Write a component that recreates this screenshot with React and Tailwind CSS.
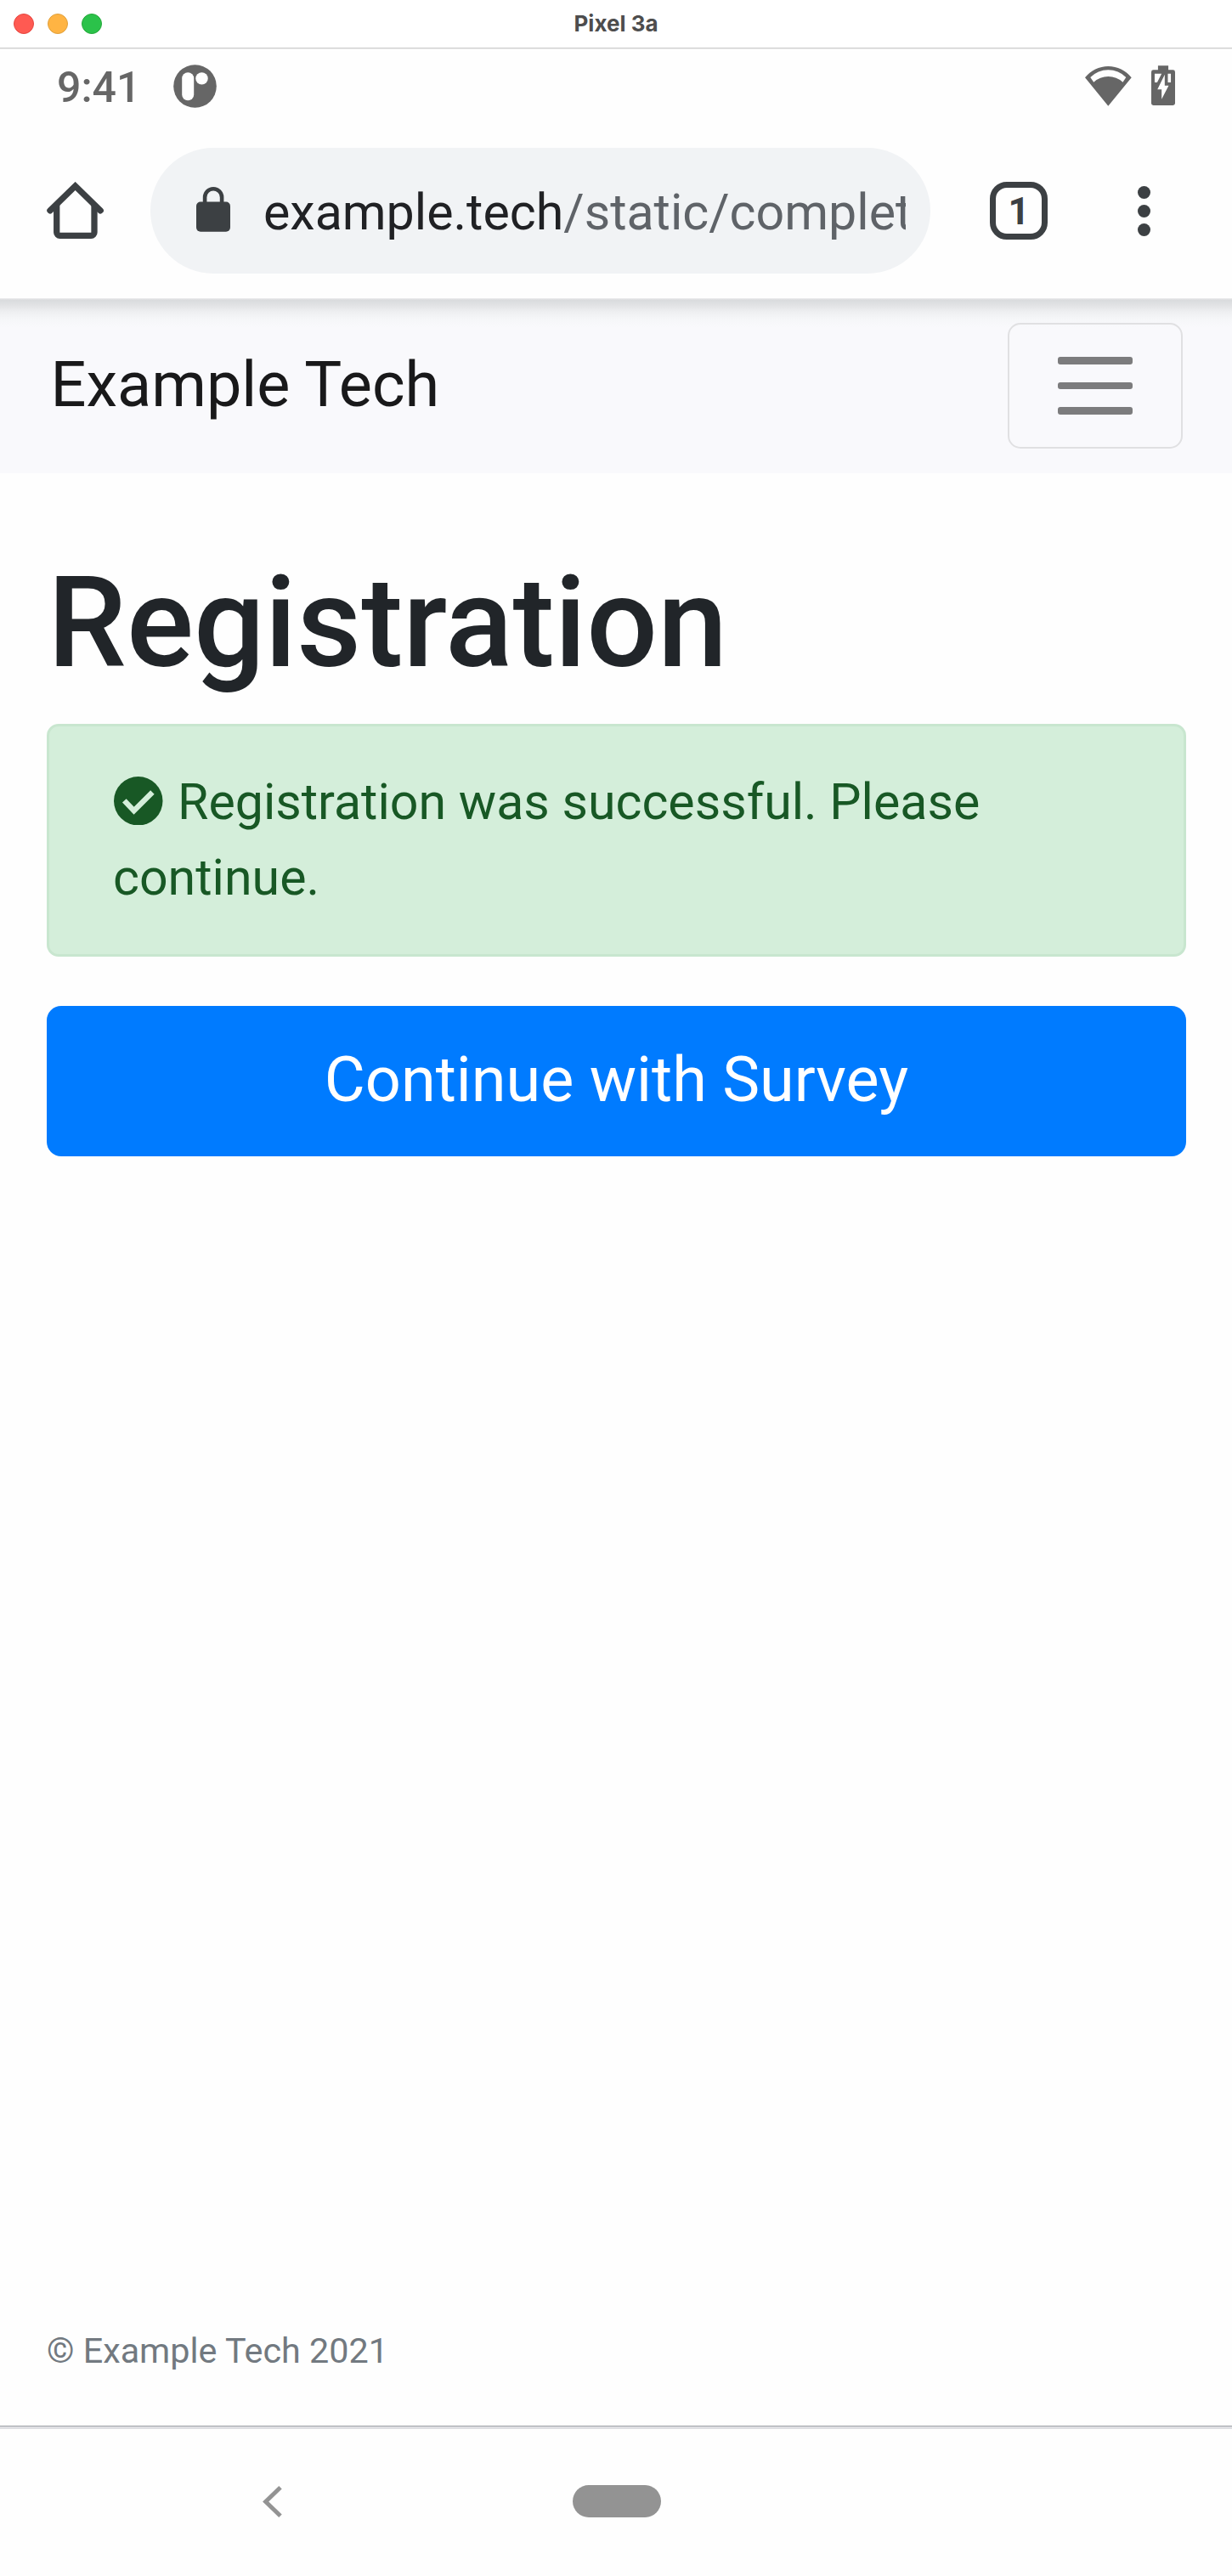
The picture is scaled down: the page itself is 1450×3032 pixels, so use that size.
function TitleBar() {
  return (
    <header className="flex h-[57px] shrink-0 items-center justify-between border-b border-[#cdcdcd] bg-white px-4 shadow-[0_1px_0_#ececec]">
      <div className="flex w-[200px] gap-4">
        <span className="size-6 rounded-full border border-[#e5453f] bg-[#ff5a52]" />
        <span className="size-6 rounded-full border border-[#dfa03c] bg-[#ffb443]" />
        <span className="size-6 rounded-full border border-[#24a83a] bg-[#2bc24a]" />
      </div>
      <h1 className="pb-px font-['Inter'] text-[26px] leading-8 font-bold text-[#4d4d4d]">Pixel 3a</h1>
      <div className="w-[200px]" />
    </header>
  );
}

function StatusBar() {
  return (
    <div className="flex h-[88px] shrink-0 items-center pr-[67px] pl-[67px]">
      <div className="w-[137px] pt-[3px] text-[50px] leading-none font-medium text-[#666]">9:41</div>
      <svg className="size-[51px]" viewBox="0 0 51 51">
        <circle cx="25.5" cy="25.5" r="25.3" fill="#666" />
        <rect x="10.2" y="9.3" width="14" height="33" rx="7" fill="#fff" />
        <circle cx="33.5" cy="16.400" r="7.200" fill="#fff" />
      </svg>
      <svg className="mr-[23px] ml-auto h-[47px] w-[55px]" viewBox="0 0 55 47">
        <path
          fill="#666"
          fillRule="evenodd"
          d="M0 13.300A34.800 34.800 0 0 1 54.700 13.300L27.300 46.700ZM6.300 13L10.200 18.700A25.600 25.600 0 0 1 44.500 18.700L48.300 13A29.600 29.600 0 0 0 6.300 13Z"
        />
      </svg>
      <svg className="h-[48px] w-[28px]" viewBox="0 0 28.300 48">
        <rect x="8" y="0" width="12.300" height="8" fill="#666" />
        <rect x="0" y="5" width="28.300" height="42.300" rx="2.500" fill="#666" />
        <path
          fill="#fff"
          d="M4 9.700H12.300L7 20H4ZM19.700 9.700H23.300V20H19.700ZM16 10.700V23.700H20.700L12.300 40V28.300H7.300Z"
        />
      </svg>
    </div>
  );
}

function BrowserBar() {
  return (
    <div className="flex h-[206px] shrink-0 items-center pl-[55px]">
      <svg className="h-[68px] w-[67px]" viewBox="0 0 67 68" fill="none" stroke="#3c4043" strokeWidth="7.300">
        <path d="M3.900 33.800L33.600 5L63.200 33.800" strokeLinecap="round" />
        <path d="M11.700 27V59.500A3.800 3.800 0 0 0 15.500 63.300H52.200A3.800 3.800 0 0 0 56 59.500V27" />
      </svg>
      <div className="ml-[55px] flex h-[148px] w-[918px] items-center rounded-full bg-[#f1f3f5] pr-[29px] pl-[54px]">
        <svg className="mb-[3px] h-[53px] w-[40px] shrink-0" viewBox="0 0 40 53">
          <path d="M10.100 22V12.300A10 10 0 0 1 30.100 12.300V22" fill="none" stroke="#3c4043" strokeWidth="4.600" />
          <rect x="0" y="17.500" width="40" height="35.300" rx="5" fill="#3c4043" />
        </svg>
        <div className="ml-[39px] w-0 grow overflow-hidden pt-1 text-[59.100px] leading-[80px] whitespace-nowrap text-[#202124]">
          example.tech<span className="text-[#5f6368]">/static/complet</span>
        </div>
      </div>
      <div className="ml-[70px] flex size-[68px] items-center justify-center rounded-[20px] border-[7.500px] border-[#3c4043] pt-0.5 text-[44px] leading-none font-bold text-[#3c4043]">
        1
      </div>
      <div className="ml-[106px] flex flex-col gap-[7px]">
        <span className="size-[15px] rounded-full bg-[#3c4043]" />
        <span className="size-[15px] rounded-full bg-[#3c4043]" />
        <span className="size-[15px] rounded-full bg-[#3c4043]" />
      </div>
    </div>
  );
}

function NavBar() {
  return (
    <nav className="flex h-[206px] shrink-0 items-center justify-between bg-[#f8f9fb] bg-[linear-gradient(to_bottom,#eeeeef_0px,#d9dbdd_2px,#e1e2e4_8px,#eeeff1_16px,#f5f6f8_24px,#f9f9fc_34px)] pr-[58px] pl-[59.500px]">
      <span className="pb-0.5 text-[73.800px] leading-[110px] text-[#19191a]">Example Tech</span>
      <button className="flex h-[148px] w-[206px] flex-col items-center justify-center gap-[21px] rounded-[15px] border-2 border-[#e0e0e2]">
        <span className="h-[8.500px] w-[88px] rounded-[3px] bg-[#7c7c7d]" />
        <span className="h-[8.500px] w-[88px] rounded-[3px] bg-[#7c7c7d]" />
        <span className="h-[8.500px] w-[88px] rounded-[3px] bg-[#7c7c7d]" />
      </button>
    </nav>
  );
}

function SuccessIcon() {
  return (
    <svg className="mr-[17.500px] ml-px inline-block size-[57.500px] align-[-7px]" viewBox="0 0 57.500 57.500">
      <circle cx="28.750" cy="28.750" r="28.750" fill="#185825" />
      <path
        d="M12.300 28.400L23.600 40.200L45.400 18.600"
        fill="none"
        stroke="#d4eeda"
        strokeWidth="6.400"
      />
    </svg>
  );
}

export default function App() {
  return (
    <div className="flex h-[3032px] w-[1450px] flex-col bg-[#fefefe] font-['Roboto',sans-serif]">
      <TitleBar />
      <StatusBar />
      <BrowserBar />
      <NavBar />
      <main className="flex grow flex-col pt-[88px] pr-[54px] pl-[55px]">
        <h2 className="pl-px text-[147.600px] leading-[177px] font-medium text-[#212529]">Registration</h2>
        <div className="mt-[30px] h-[274px] rounded-[14px] border-[3px] border-[#c8e6cf] bg-[#d4eeda] px-[75px] pt-[45px] text-[59.080px] leading-[88.600px] text-[#185825]">
          <SuccessIcon />
          Registration was successful. Please continue.
        </div>
        <button className="mt-[58px] h-[177px] rounded-[17px] bg-[#007bff] pb-[3px] text-[73.800px] leading-[110px] text-white">
          Continue with Survey
        </button>
      </main>
      <footer className="shrink-0 px-[55px] pb-[57px] text-[41.300px] leading-[62px] text-[#727980]">
        © Example Tech 2021
      </footer>
      <div className="flex h-[177px] shrink-0 items-center border-t border-[#a0a3a7] pl-[309px] shadow-[inset_0_3px_0_#dedfe3]">
        <svg className="h-[37px] w-[24px]" viewBox="0 0 24 37" fill="none" stroke="#939393" strokeWidth="5">
          <path d="M21 1.800L3.700 18.500L21 35.200" />
        </svg>
        <span className="ml-[341px] h-[38px] w-[104px] rounded-full bg-[#939393]" />
      </div>
    </div>
  );
}
